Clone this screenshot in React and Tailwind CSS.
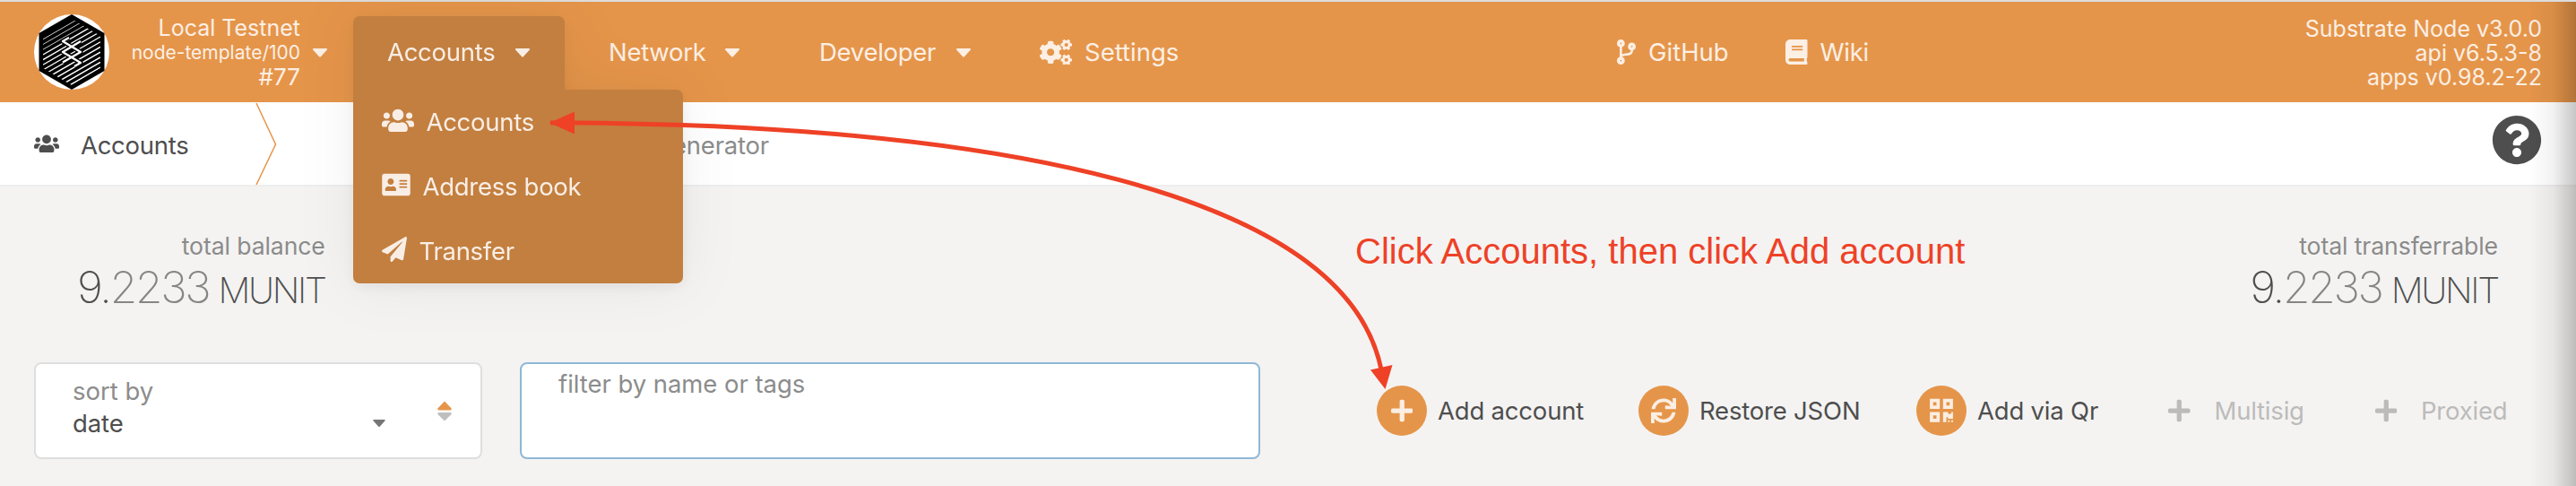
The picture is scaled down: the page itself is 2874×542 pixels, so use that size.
import {
  FaAddressCard,
  FaBook,
  FaCodeBranch,
  FaCogs,
  FaPaperPlane,
  FaPlus,
  FaQrcode,
  FaQuestionCircle,
  FaSync,
  FaUsers,
} from "react-icons/fa";

function Caret({ className = "" }) {
  return (
    <svg viewBox="0 0 16 10" className={`h-[10px] w-[16px] shrink-0 ${className}`} fill="currentColor">
      <path d="M1 0h14c1 0 1.400 1 .7 1.700L8.800 9.300c-.5.5-1.100.5-1.600 0L.3 1.700C-.4 1 0 0 1 0z" />
    </svg>
  );
}

function Logo() {
  const lines = Array.from({ length: 22 }, (_, i) => -14 + i * 5.7);
  return (
    <svg viewBox="0 0 84 84" className="h-[84px] w-[84px] shrink-0">
      <defs>
        <clipPath id="hex">
          <path d="M42 5 74 24V60L42 79 10 60V24Z" />
        </clipPath>
      </defs>
      <circle cx="42" cy="42" r="42" fill="#fff" />
      <path d="M42 0 78.500 21V63L42 84 5.500 63V21Z" fill="#000" />
      <g clipPath="url(#hex)" stroke="#fff">
        {lines.map((y, i) => (
          <path key={y} d={`M10 ${y + 19}L74 ${y - 18}`} strokeWidth={i > 11 ? 1.5 : i > 6 ? 1.3 : 0.8} />
        ))}
      </g>
      <g fill="none" strokeLinejoin="round">
        <path d="M39 26 32 30 52 42 32 53.500M52 30 32 42 52 54 45 58" stroke="#000" strokeWidth="5" />
        <path d="M39 26 32 30 52 42 32 53.500M52 30 32 42 52 54 45 58" stroke="#fff" strokeWidth="2.400" />
      </g>
    </svg>
  );
}

function MenuItem({ icon, label }) {
  return (
    <div className="flex h-[72px] items-center pl-8">
      {icon}
      <span className="ml-[13.5px]">{label}</span>
    </div>
  );
}

function Balance({ label }) {
  return (
    <div className="flex flex-col items-end">
      <span className="mt-[-1px] h-[35px] text-[26.6px] leading-[34px] tracking-[-0.1px] text-[#8b8b8a]">{label}</span>
      <div className="mt-[-2px] flex h-[60px] items-baseline font-extralight leading-[60px] text-[#4e4e4e]">
        <span className="text-[49.5px] tracking-[-2.3px]">
          9.<span className="text-[#858584]">2233</span>
        </span>
        <span className="ml-[10px] text-[40px] tracking-[-2.3px]">MUNIT</span>
      </div>
    </div>
  );
}

function Action({ icon, label }) {
  return (
    <div className="flex items-center">
      <span className="flex h-14 w-14 items-center justify-center rounded-full bg-[#e5954a] text-[#fbeee2]">{icon}</span>
      <span className="ml-[12px]">{label}</span>
    </div>
  );
}

function Header() {
  return (
    <header className="relative z-10 flex h-[112px] items-center bg-[#e5954a] pr-[38px] pl-[38px] text-[#fcefe4]">
      <Logo />
      <div className="w-[213px] text-right text-[25px] leading-[27px] tracking-[0px]">
        <div>Local Testnet</div>
        <div className="text-[21px]">node-template/100</div>
        <div className="text-[26px]">#77</div>
      </div>
      <Caret className="mt-[2px] ml-[14px]" />
      <div className="relative mt-4 ml-[29px] h-[82px] w-[236px] self-start text-[#f9eee6] [filter:drop-shadow(0_4px_8px_rgba(0,0,0,0.06))_drop-shadow(0_0_32px_rgba(0,0,0,0.06))]">
        <div className="flex h-[83px] items-center rounded-t-[7px] bg-[#c37f3f] pl-[38px]">
          <span className="mt-[-3px] w-[143px]">Accounts</span>
          <Caret className="mt-[-1px]" />
        </div>
        <nav className="absolute top-[82px] left-0 w-[368px] rounded-[7px] rounded-tl-none bg-[#c37f3f]">
          <MenuItem icon={<FaUsers className="mt-[-4px] h-[28.800px] w-[36px]" />} label="Accounts" />
          <MenuItem icon={<FaAddressCard className="mt-[-4px] h-[28px] w-[32px]" />} label="Address book" />
          <MenuItem icon={<FaPaperPlane className="mt-[-4px] h-[28px] w-[28px]" />} label="Transfer" />
        </nav>
      </div>
      <span className="ml-[49px] w-[130px]">Network</span>
      <Caret className="mt-[2px]" />
      <span className="ml-[89px] w-[153px]">Developer</span>
      <Caret className="mt-[2px]" />
      <FaCogs className="ml-[77px] h-[28.800px] w-[36px]" />
      <span className="ml-[14px] w-[109px] tracking-[0px]">Settings</span>
      <FaCodeBranch className="ml-[485px] h-[28px] w-[21px]" />
      <span className="ml-[14px] w-[91px] tracking-[0px]">GitHub</span>
      <FaBook className="ml-[62px] h-[28px] w-[24.500px]" />
      <span className="ml-[14px]">Wiki</span>
      <div className="ml-auto pt-[2px] text-right text-[25px] leading-[27px] tracking-[0px]">
        <div>Substrate Node v3.0.0</div>
        <div>api v6.5.3-8</div>
        <div>apps v0.98.2-22</div>
      </div>
    </header>
  );
}

export default function App() {
  return (
    <div className="relative h-[542px] w-[2874px] overflow-hidden bg-[#f4f3f2] font-[Inter,sans-serif] text-[27.5px] leading-[34px] font-[420] tracking-[-0.28px] whitespace-nowrap text-[#4e4e4e]">
      <div className="h-[2px] bg-[#dcdcdc]" />
      <Header />

      <div className="flex h-[94px] items-start border-b-2 border-[#eeeeee] bg-white pl-[38px]">
        <div className="flex h-[92px] items-center">
          <FaUsers className="h-[22.400px] w-[28px]" />
          <span className="mt-[3px] ml-[24px] w-[195px]">Accounts</span>
        </div>
        <svg viewBox="0 0 24 92" className="h-[92px] w-[24px]" fill="none" stroke="#e5954a" strokeWidth="1.500">
          <path d="M1 1 22.500 47 1 92" />
        </svg>
        <span className="mt-[31px] w-[549px] text-right tracking-[-0.2px] text-[#8c8c8c]">Vanity generator</span>
        <FaQuestionCircle className="mt-[14px] mr-[38px] ml-auto h-[56px] w-[56px]" />
      </div>

      <div className="mt-[50px] flex justify-between pr-[87px] pl-[86px]">
        <Balance label="total balance" />
        <Balance label="total transferrable" />
      </div>

      <div className="mt-[54px] flex items-center pl-[38px]">
        <div className="flex h-[108px] w-[500px] rounded-[8px] border-2 border-[#dedede] bg-white pt-[12px] pl-[41px]">
          <div className="w-[350px] leading-[36px]">
            <div className="tracking-[0px] text-[#8c8c8c]">sort by</div>
            <div className="flex items-center justify-between">
              <span className="tracking-[-0.1px]">date</span>
              <Caret className="mt-[-1px] scale-[0.85] text-[#767676]" />
            </div>
          </div>
          <svg viewBox="0 0 16 22" className="mt-[29px] ml-[57px] h-[23px] w-[16px]">
            <path d="M8 0 15.700 8Q16 10 14.500 10H1.500Q0 10 .300 8Z" fill="#e5954a" />
            <path d="M8 22 15.700 14.500Q16 12.500 14.500 12.500H1.500Q0 12.500 .300 14.500Z" fill="#bfbfbf" />
          </svg>
        </div>
        <div className="ml-[42px] h-[108px] w-[826px] rounded-[8px] border-2 border-[#8fb8d6] bg-white pt-[5px] pl-[41px] tracking-[-0.05px] text-[#8c8c8c]">
          filter by name or tags
        </div>
        <div className="ml-[130px] flex w-[1262px] items-center tracking-[-0.2px]">
          <div className="w-[292px]">
            <Action icon={<FaPlus className="h-[28px] w-[24.500px]" />} label="Add account" />
          </div>
          <div className="w-[310px]">
            <Action icon={<FaSync className="h-[28px] w-[28px]" />} label="Restore JSON" />
          </div>
          <div className="w-[281px]">
            <Action icon={<FaQrcode className="h-[29.500px] w-[26px]" />} label="Add via Qr" />
          </div>
          <FaPlus className="h-[28px] w-[24.500px] text-[#bcbbba]" />
          <span className="ml-[27px] w-[179px] text-[#bcbbba]">Multisig</span>
          <FaPlus className="h-[28px] w-[24.500px] text-[#bcbbba]" />
          <span className="ml-[27px] text-[#bcbbba]">Proxied</span>
        </div>
      </div>

      <div className="absolute top-[257px] left-[1512px] font-['Liberation_Sans',sans-serif] text-[40px] leading-[46px] font-normal tracking-normal text-[#ee4126]">
        Click Accounts, then click Add account
      </div>
      <svg viewBox="0 0 2874 542" className="absolute inset-0 z-20 h-[542px] w-[2874px]">
        <path d="M614 137H641C1100 140.500 1500 211 1541 412" fill="none" stroke="#ee4126" strokeWidth="5" />
        <path d="M613 137 641 124.500V149.500Z" fill="#ee4126" />
        <path d="M1545.500 434 1529 412.500 1553.500 407Z" fill="#ee4126" />
      </svg>
      <div className="absolute top-[2px] right-0 z-30 h-[540px] w-[52px] bg-linear-to-r from-black/0 via-black/5 to-black/22" />
    </div>
  );
}
